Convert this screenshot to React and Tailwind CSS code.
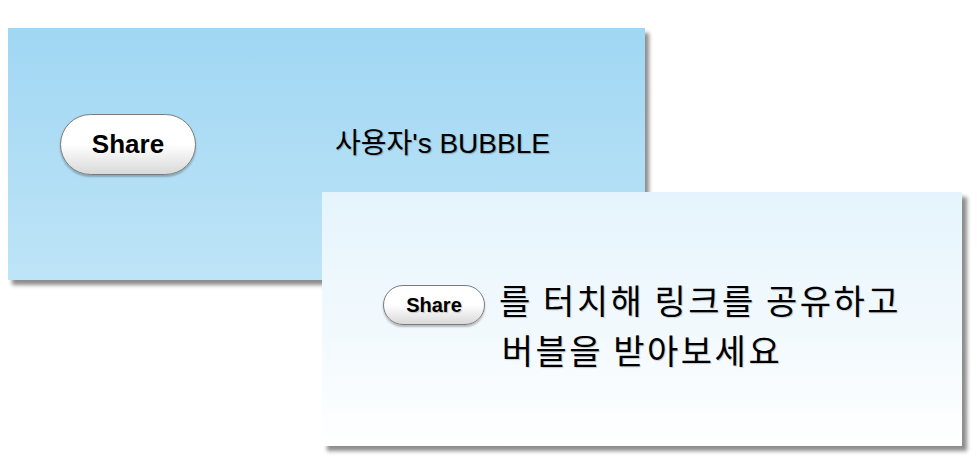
const ShareButton = ({ big }) => (
  <span
    className={`inline-flex items-center justify-center rounded-full border border-[#7a7a7a] bg-gradient-to-b from-white via-white to-[#d9d9d9] shadow-[0_2px_2px_rgba(0,0,0,0.25)] font-bold text-black tracking-normal ${
      big ? 'w-[136px] h-[61px] text-[26px]' : 'w-[102px] h-[40px] text-[20px] align-middle mr-[4px]'
    }`}
    style={{ fontFamily: '"Liberation Sans", Arial, sans-serif' }}
  >
    Share
  </span>
);

export default function App() {
  return (
    <div className="w-[977px] h-[473px] bg-white overflow-hidden">
      {/* user bubble card */}
      <div className="ml-[8px] mt-[28px] w-[637px] h-[252px] bg-gradient-to-b from-[#a0d7f3] to-[#bee4f7] shadow-[4px_5px_4px_rgba(0,0,0,0.45)] flex items-start pt-[86px] pl-[52px]">
        <ShareButton big />
        <span
          className="ml-[139px] mt-[13px] text-[28px] leading-[34px] text-black [text-shadow:1px_1px_1px_rgba(0,0,0,0.25)]"
          style={{ fontFamily: '"Liberation Sans", "Noto Sans CJK KR", sans-serif' }}
        >
          사용자's BUBBLE
        </span>
      </div>

      {/* hint card */}
      <div className="relative z-10 ml-[322px] -mt-[88px] w-[640px] h-[254px] bg-gradient-to-b from-[#e5f4fc] via-[#f6fbfe] via-70% to-white shadow-[5px_5px_4px_rgba(0,0,0,0.45)] pt-[83px] text-center">
        <p
          className="text-[34px] leading-[50px] text-black tracking-[2.5px] [text-shadow:1px_1px_1px_rgba(0,0,0,0.2)]"
          style={{ fontFamily: '"Noto Sans CJK KR", "Liberation Sans", sans-serif' }}
        >
          <ShareButton /> 를 터치해 링크를 공유하고
          <br />
          버블을 받아보세요
        </p>
      </div>
    </div>
  );
}
